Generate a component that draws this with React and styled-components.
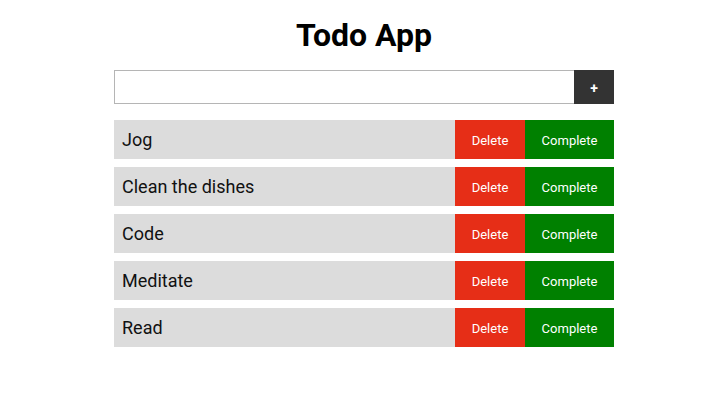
import React, { useState } from 'react'
import styled, { createGlobalStyle } from 'styled-components'

const GlobalStyle = createGlobalStyle`
  body {
    margin: 0;
    font-family: Roboto, "Liberation Sans", sans-serif;
    background: #fff;
  }
`

const Page = styled.div`
  width: 500px;
  margin: 0 auto;
  padding-top: 15px;
  display: flex;
  flex-direction: column;
`

const Title = styled.h1`
  margin: 0 0 15px;
  text-align: center;
  font-size: 32px;
  line-height: 40px;
  font-weight: 700;
  color: #000;
`

const Form = styled.form`
  display: flex;
  height: 34px;
  margin-bottom: 16px;
`

const Input = styled.input`
  flex: 1;
  box-sizing: border-box;
  height: 100%;
  border: 1px solid #b5b5b5;
  border-right: none;
  padding: 0 8px;
  font-size: 16px;
  font-family: inherit;
  outline: none;
`

const AddButton = styled.button`
  width: 40px;
  height: 100%;
  padding-top: 2px;
  border: none;
  background: #333;
  color: #fff;
  font-family: inherit;
  font-weight: 700;
  font-size: 14px;
  cursor: pointer;
`

const List = styled.ul`
  list-style: none;
  margin: 0;
  padding: 0;
  display: flex;
  flex-direction: column;
  gap: 8px;
`

const Row = styled.li`
  display: flex;
  height: 39px;
  background: #dcdcdc;
`

const Label = styled.span`
  flex: 1;
  display: flex;
  align-items: center;
  padding-left: 8px;
  font-size: 18px;
  color: #111;
`

const ActionButton = styled.button`
  width: ${p => p.$w}px;
  padding-top: 2px;
  border: none;
  background: ${p => p.$bg};
  color: #fff;
  font-family: inherit;
  font-size: 13px;
  font-weight: 400;
  cursor: pointer;
`

export default function App() {
  const [todos] = useState(['Jog', 'Clean the dishes', 'Code', 'Meditate', 'Read'])

  return (
    <>
      <GlobalStyle />
      <Page>
        <Title>Todo App</Title>
        <Form onSubmit={e => e.preventDefault()}>
          <Input type="text" />
          <AddButton type="submit">+</AddButton>
        </Form>
        <List>
          {todos.map((todo, index) => (
            <Row key={index}>
              <Label>{todo}</Label>
              <ActionButton $w={70} $bg="#e62e17">Delete</ActionButton>
              <ActionButton $w={89} $bg="#008000">Complete</ActionButton>
            </Row>
          ))}
        </List>
      </Page>
    </>
  )
}
